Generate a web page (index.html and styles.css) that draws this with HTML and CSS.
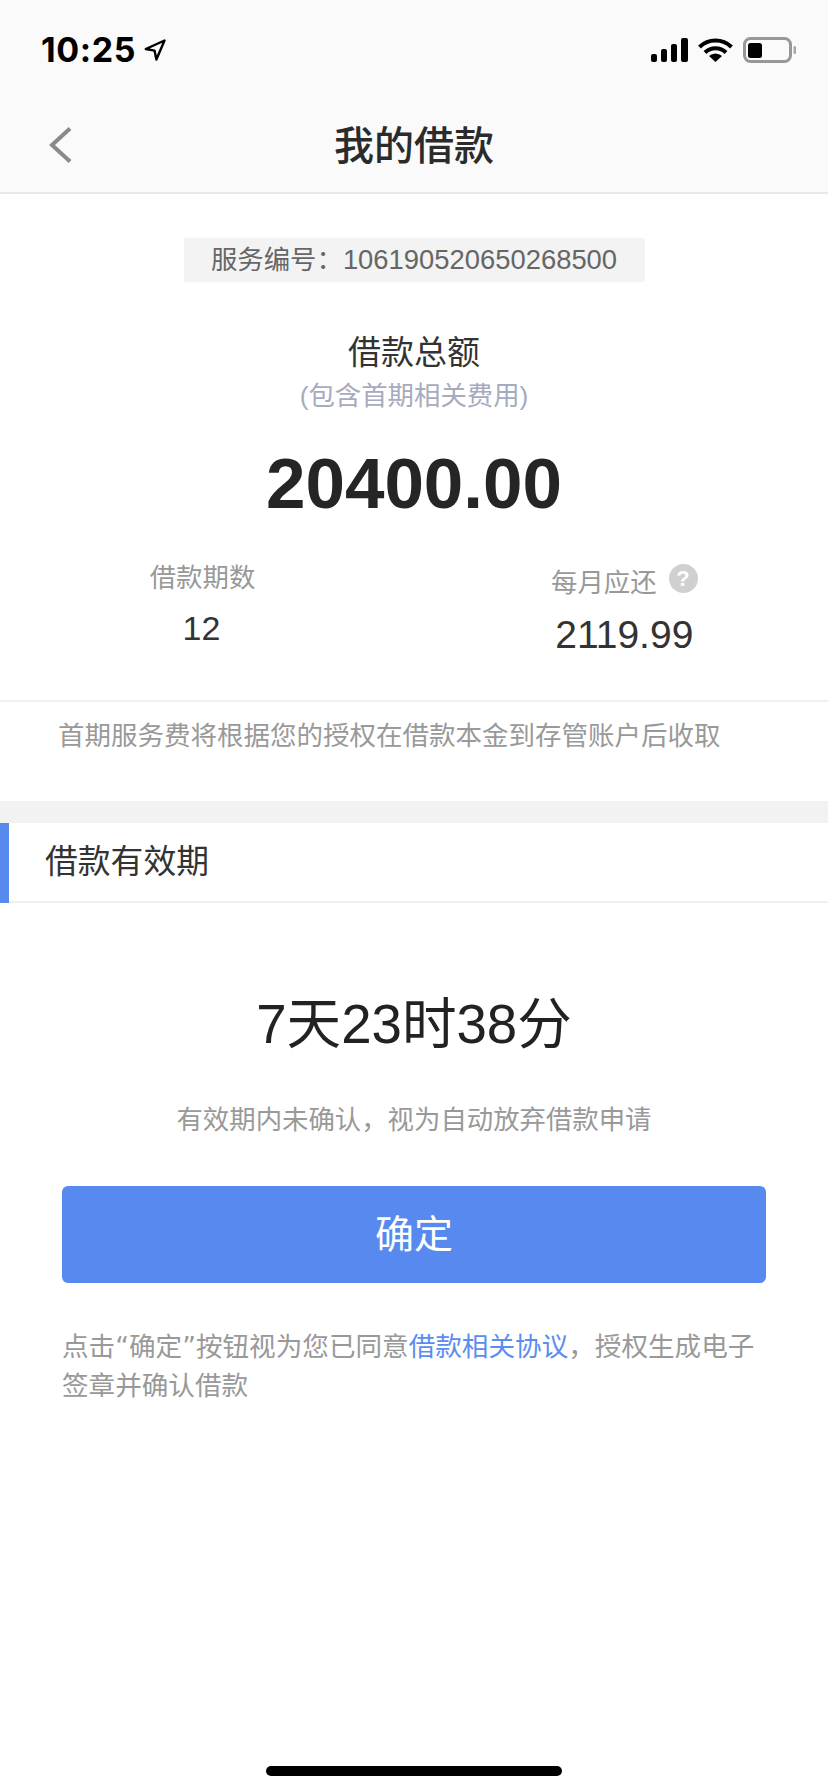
FILE: index.html
```html
<!DOCTYPE html>
<html lang="zh-CN">
<head>
  <meta charset="UTF-8">
  <meta name="viewport" content="width=device-width, initial-scale=1.0">
  <title>我的借款</title>
  <link rel="stylesheet" href="styles.css">
</head>
<body>
  <header class="top-bar">
    <div class="status-bar">
      <div class="status-left">
        <span class="clock">10:25</span>
        <svg class="locate-icon" width="22" height="22" viewBox="0 0 22 22"><path d="M20.500 1.500 1.800 10l8.700 1.600 1.900 8.900z" fill="none" stroke="#000" stroke-width="2.400" stroke-linejoin="round"/></svg>
      </div>
      <div class="status-right">
        <svg width="37" height="24" viewBox="0 0 37 24"><rect x="0" y="16" width="6" height="8" rx="2"/><rect x="10" y="11" width="6" height="13" rx="2"/><rect x="20" y="6" width="6" height="18" rx="2"/><rect x="30" y="0" width="7" height="24" rx="2"/></svg>
        <svg width="35" height="24" viewBox="0 0 35 24"><path d="M1.500 9a23 23 0 0 1 32 0M7 14.500a15 15 0 0 1 21 0" fill="none" stroke="#000" stroke-width="4"/><path d="M17.500 24 11 18a9.500 9.500 0 0 1 13 0z"/></svg>
        <svg width="53" height="26" viewBox="0 0 53 26"><rect x="1.500" y="1.500" width="46" height="23" rx="6" fill="none" stroke="#979797" stroke-width="3"/><rect x="5" y="6" width="14" height="15" rx="2.500"/><rect x="50.500" y="9" width="2.500" height="8" rx="1.200" fill="#a8a8a8"/></svg>
      </div>
    </div>
    <div class="nav-bar">
      <svg class="back-icon" width="24" height="36" viewBox="0 0 24 36"><path d="M22 1.500 4 18l18 16.500" fill="none" stroke="#8a8a8a" stroke-width="4"/></svg>
      <h1 class="nav-title">我的借款</h1>
    </div>
  </header>

  <main>
    <section class="summary">
      <div class="service-no">服务编号：<span class="num">106190520650268500</span></div>
      <div class="total-label">借款总额</div>
      <div class="total-hint">(包含首期相关费用)</div>
      <div class="total-amount">20400.00</div>
      <div class="stats">
        <div class="stat stat-left">
          <div class="stat-label">借款期数</div>
          <div class="stat-value stat-count">12</div>
        </div>
        <div class="stat stat-right">
          <div class="stat-label">每月应还<span class="help">?</span></div>
          <div class="stat-value">2119.99</div>
        </div>
      </div>
    </section>
    <p class="fee-note">首期服务费将根据您的授权在借款本金到存管账户后收取</p>

    <h2 class="section-title">借款有效期</h2>

    <section class="validity">
      <div class="countdown">7天23时38分</div>
      <p class="validity-note">有效期内未确认，视为自动放弃借款申请</p>
      <button class="confirm-btn">确定</button>
      <p class="terms">点击“确定”按钮视为您已同意<a class="terms-link">借款相关协议</a>，授权生成电子签章并确认借款</p>
    </section>
  </main>

  <div class="home-indicator"></div>
</body>
</html>
```

FILE: styles.css
```css
* {
  box-sizing: border-box;
}
body {
  margin: 0;
  height: 1792px;
  position: relative;
  overflow: hidden;
  background-color: #fff;
  font-family: "Liberation Sans", "Noto Sans CJK SC", sans-serif;
  color: #222;
}
.top-bar {
  height: 194px;
  background-color: #fafafa;
  border-bottom: 2px solid #e8e8e8;
}
.status-bar {
  height: 94px;
  padding: 37px 32px 0 41px;
  display: flex;
  justify-content: space-between;
  align-items: flex-start;
}
.status-left {
  display: flex;
  align-items: center;
  gap: 8px;
}
.clock {
  font-family: Inter, sans-serif;
  font-weight: 700;
  font-size: 34px;
  letter-spacing: 0.6px;
  line-height: 26px;
  color: #000;
}
.status-right {
  display: flex;
  align-items: center;
  gap: 10px;
}
.nav-bar {
  height: 98px;
  display: flex;
  align-items: center;
  justify-content: center;
  position: relative;
}
.back-icon {
  position: absolute;
  left: 48px;
  top: 33px;
}
.nav-title {
  margin: 0;
  font-size: 40px;
  font-weight: 500;
  color: #2b2b2b;
}
.summary {
  padding-top: 44px;
  display: flex;
  flex-direction: column;
  align-items: center;
}
.service-no {
  width: 461px;
  height: 44px;
  background-color: #f3f3f3;
  border-radius: 2px;
  color: #666;
  font-size: 26.400px;
  line-height: 44px;
  text-align: center;
}
.num {
  font-size: 27.400px;
}
.total-label {
  margin-top: 49px;
  font-size: 33px;
  line-height: 44px;
  color: #333;
}
.total-hint {
  margin-top: 1px;
  font-size: 26.400px;
  line-height: 40px;
  color: #a6abc0;
}
.total-amount {
  margin-top: 26px;
  font-size: 71px;
  line-height: 84px;
  font-weight: 700;
  color: #252525;
}
.stats {
  width: 100%;
  height: 174px;
  display: flex;
  padding-top: 34px;
}
.stat {
  display: flex;
  flex-direction: column;
  align-items: center;
}
.stat-left {
  margin-left: 150px;
  width: 105px;
}
.stat-right {
  margin-left: 296px;
  padding-top: 4px;
}
.stat-label {
  font-size: 26.400px;
  line-height: 36px;
  color: #999;
  white-space: nowrap;
}
.help {
  display: inline-block;
  width: 29px;
  height: 29px;
  margin-left: 12px;
  border-radius: 50%;
  background-color: #d0d0d0;
  color: #fff;
  font-size: 22px;
  font-weight: 700;
  line-height: 29px;
  text-align: center;
  vertical-align: 6px;
}
.stat-value {
  margin-top: 11px;
  font-size: 39px;
  line-height: 46px;
  color: #333;
}
.stat-count {
  margin-top: 9px;
  padding-right: 2px;
  font-size: 34px;
}
.fee-note {
  margin: 0;
  height: 101px;
  padding: 14px 0 0 58px;
  border-top: 2px solid #f0f0f0;
  font-size: 26.500px;
  line-height: 40px;
  color: #999;
}
.section-title {
  margin: 0;
  height: 102px;
  padding-left: 45px;
  border-top: 22px solid #f2f2f2;
  border-bottom: 2px solid #f0f0f0;
  font-size: 32.800px;
  font-weight: 400;
  line-height: 78px;
  color: #333;
  position: relative;
}
.section-title::before {
  content: "";
  position: absolute;
  left: 0;
  top: 0;
  bottom: -2px;
  width: 9px;
  background-color: #5789ef;
}
.validity {
  padding: 85px 62px 0;
}
.countdown {
  font-size: 54.600px;
  line-height: 74px;
  text-align: center;
  color: #222;
}
.validity-note {
  margin: 38px 0 0;
  font-size: 26.400px;
  line-height: 40px;
  text-align: center;
  color: #999;
}
.confirm-btn {
  display: block;
  width: 704px;
  height: 97px;
  margin-top: 46px;
  padding: 0 0 8px;
  border: none;
  border-radius: 6px;
  background-color: #5789ef;
  color: #fff;
  font-family: inherit;
  font-size: 39px;
}
.terms {
  margin: 44px 0 0;
  font-family: "DejaVu Sans", "Noto Sans CJK SC", sans-serif;
  font-size: 26.600px;
  line-height: 39px;
  color: #999;
}
.terms-link {
  color: #5b8def;
}
.home-indicator {
  position: absolute;
  left: 266px;
  top: 1766px;
  width: 296px;
  height: 10px;
  border-radius: 5px;
  background-color: #000;
}
```
